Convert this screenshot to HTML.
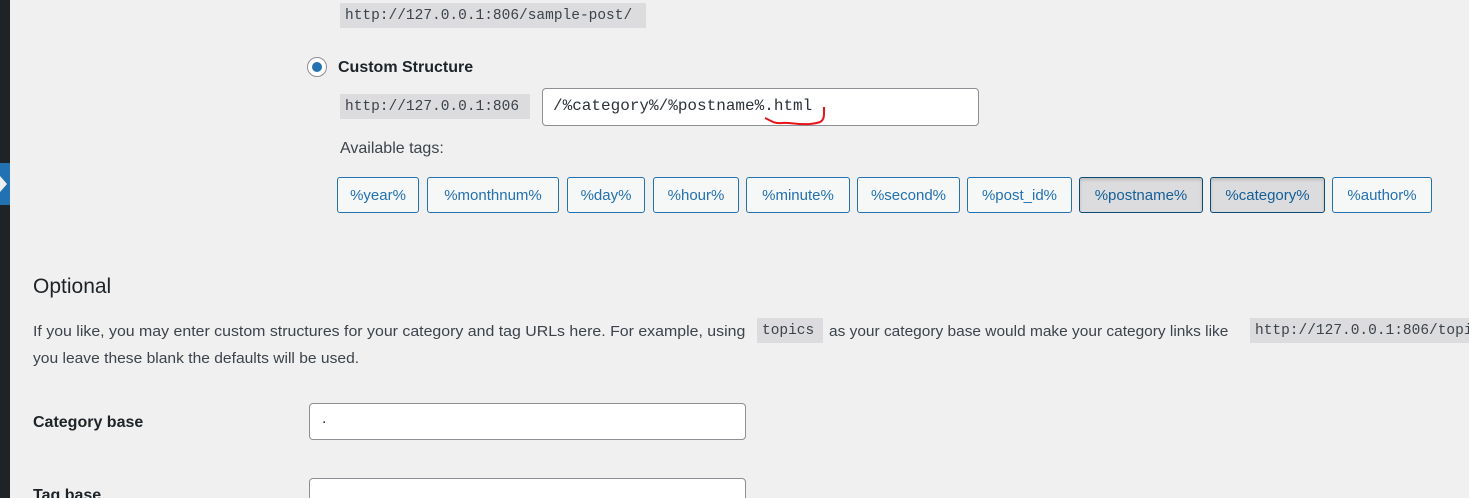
<!DOCTYPE html>
<html><head><meta charset="utf-8"><style>
html,body{margin:0;width:1469px;height:498px;overflow:hidden}
body{background:#f0f0f1;position:relative;font-family:"Liberation Sans",sans-serif;color:#1d2327}
.a{position:absolute;white-space:nowrap}
.code{position:absolute;background:#dcdcde;font-family:"Liberation Mono",monospace;font-size:14.5px;color:#3c434a;line-height:26px;height:25px;padding:0 5px;box-sizing:border-box;overflow:hidden;white-space:nowrap}
.inp{position:absolute;background:#fff;border:1px solid #8c8f94;border-radius:4px;box-sizing:border-box}
.btn{position:absolute;top:177px;height:36px;border:1px solid #2271b1;border-radius:3px;background:#f6f7f7;color:#2271b1;font-size:15px;line-height:36px;text-align:center;box-sizing:border-box}
.btn.on{background:#dcdcde;border-color:#0a4b78;color:#135e96;box-shadow:inset 0 2px 3px rgba(0,0,0,.15)}
.p{font-size:15px;color:#3c434a;transform-origin:0 0}
</style></head><body>
<div class="a" style="left:0;top:0;width:10px;height:498px;background:#1d2327"></div>
<div class="a" style="left:0;top:163px;width:10px;height:42px;background:#2271b1"></div>
<div class="a" style="left:0;top:176px;width:0;height:0;border-top:8px solid transparent;border-bottom:8px solid transparent;border-left:7px solid #f0f0f1"></div>

<div class="code" style="left:340px;top:3px;width:306px">http://127.0.0.1:806/sample-post/</div>

<div class="a" style="left:307px;top:57px;width:20px;height:20px;border:1px solid #8c8f94;border-radius:50%;background:#fff;box-sizing:border-box"></div>
<div class="a" style="left:312px;top:62px;width:10px;height:10px;border-radius:50%;background:#2271b1"></div>
<div class="a" style="left:338px;top:58px;font-size:16px;font-weight:bold;color:#1d2327;line-height:20px">Custom Structure</div>

<div class="code" style="left:340px;top:94px;width:190px">http://127.0.0.1:806</div>
<div class="inp" style="left:542px;top:88px;width:437px;height:38px"></div>
<div class="a" style="left:553px;top:97px;font-family:'Liberation Mono',monospace;font-size:16px;color:#2c3338">/%category%/%postname%.html</div>
<svg class="a" style="left:760px;top:100px" width="70" height="30"><path d="M5 18 C10 20,14 24,22 23 C30 22,36 25,50 24 C60 23,64 22,64 14 L64 7" stroke="#e5151a" stroke-width="2" fill="none"/></svg>

<div class="a p" style="left:340px;top:139px;font-size:16px;line-height:20px">Available tags:</div>

<div class="btn" style="left:337px;width:82px">%year%</div>
<div class="btn" style="left:427px;width:132px">%monthnum%</div>
<div class="btn" style="left:567px;width:78px">%day%</div>
<div class="btn" style="left:653px;width:86px">%hour%</div>
<div class="btn" style="left:746px;width:104px">%minute%</div>
<div class="btn" style="left:857px;width:103px">%second%</div>
<div class="btn" style="left:967px;width:105px">%post_id%</div>
<div class="btn on" style="left:1079px;width:124px">%postname%</div>
<div class="btn on" style="left:1210px;width:115px">%category%</div>
<div class="btn" style="left:1332px;width:100px">%author%</div>

<div class="a" style="left:33px;top:275px;font-size:21px;line-height:24px;color:#1d2327">Optional</div>
<div class="a p" style="left:33px;top:322px;line-height:20px;transform:scaleX(1.06)">If you like, you may enter custom structures for your category and tag URLs here. For example, using</div>
<div class="code" style="left:757px;top:318px;width:66px">topics</div>
<div class="a p" style="left:829px;top:322px;line-height:20px;transform:scaleX(1.03)">as your category base would make your category links like</div>
<div class="code" style="left:1250px;top:318px;width:230px">http://127.0.0.1:806/topics/</div>
<div class="a p" style="left:33px;top:349px;line-height:20px;transform:scaleX(1.04)">you leave these blank the defaults will be used.</div>

<div class="a" style="left:33px;top:413px;font-size:16px;font-weight:bold;line-height:20px">Category base</div>
<div class="inp" style="left:309px;top:403px;width:437px;height:37px"></div>
<div class="a" style="left:322px;top:410px;font-size:16px;color:#2c3338">.</div>
<div class="a" style="left:33px;top:486px;font-size:16px;font-weight:bold;line-height:20px">Tag base</div>
<div class="inp" style="left:309px;top:478px;width:437px;height:37px"></div>
</body></html>
